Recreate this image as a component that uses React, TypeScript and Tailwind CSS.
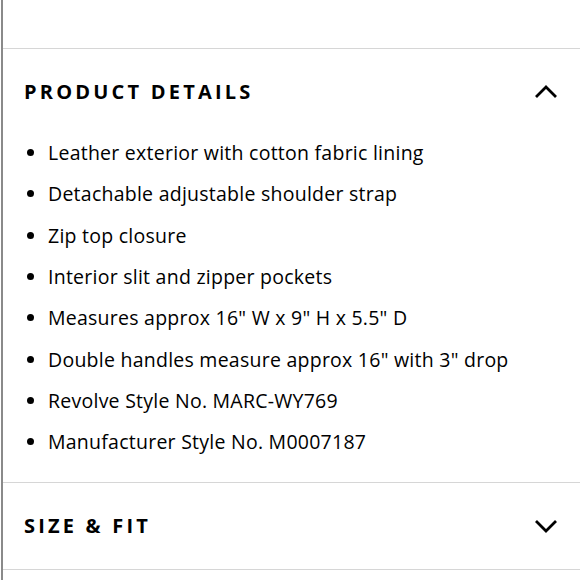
import React from 'react';

const details = [
  'Leather exterior with cotton fabric lining',
  'Detachable adjustable shoulder strap',
  'Zip top closure',
  'Interior slit and zipper pockets',
  'Measures approx 16" W x 9" H x 5.5" D',
  'Double handles measure approx 16" with 3" drop',
  'Revolve Style No. MARC-WY769',
  'Manufacturer Style No. M0007187',
];

const Chevron = ({ up }: { up?: boolean }) => (
  <svg width="24" height="14" viewBox="0 0 24 14" fill="none" className="block">
    <path
      d={up ? 'M2 12L12 2L22 12' : 'M2 2L12 12L22 2'}
      stroke="#000"
      strokeWidth="2.8"
    />
  </svg>
);

export default function App() {
  return (
    <div className="w-[580px] h-[580px] bg-white overflow-hidden">
      <div className="ml-px h-full border-l-2 border-[#8a8a8a] font-['Open_Sans',sans-serif] text-black">
        <div className="h-[49px] border-b border-[#d6d6d6]" />

        <section className="border-b border-[#d6d6d6]">
          <div className="h-[83px] pt-[2px] flex items-center justify-between pl-[21px] pr-[22px]">
            <h2 className="text-[20px] font-bold tracking-[0.16em]">PRODUCT DETAILS</h2>
            <Chevron up />
          </div>
          <ul className="pb-[20px]">
            {details.map((d) => (
              <li key={d} className="h-[41.3px] flex items-center text-[19.5px] tracking-[0.25px]">
                <span className="w-[45px] flex justify-start pl-[24px]">
                  <span className="w-[7px] h-[7px] rounded-full bg-black" />
                </span>
                <span>{d}</span>
              </li>
            ))}
          </ul>
        </section>

        <section className="border-b border-[#d6d6d6]">
          <div className="h-[86px] flex items-center justify-between pl-[21px] pr-[22px]">
            <h2 className="text-[20px] font-bold tracking-[0.16em]">SIZE &amp; FIT</h2>
            <Chevron />
          </div>
        </section>
      </div>
    </div>
  );
}
